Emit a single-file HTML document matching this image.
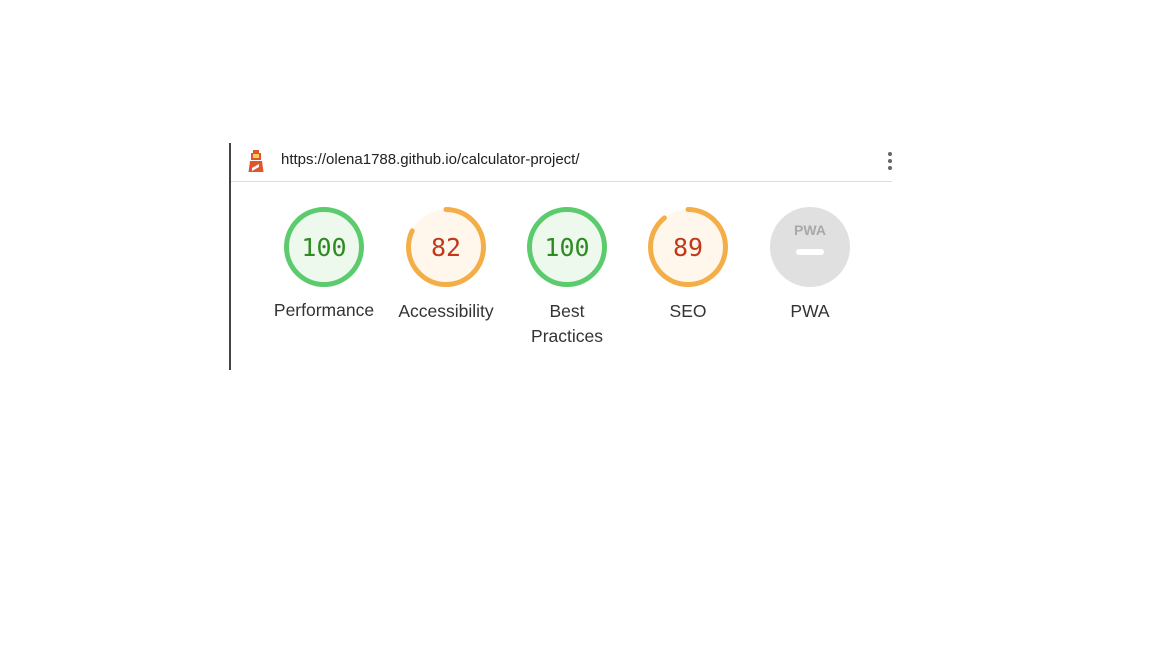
<!DOCTYPE html>
<html><head><meta charset="utf-8"><style>
body{margin:0;width:1152px;height:648px;background:#fff;position:relative;overflow:hidden;font-family:"Liberation Sans",sans-serif}
.vl{position:absolute;left:229px;top:143px;width:2px;height:227px;background:#444}
.hd{position:absolute;left:231px;top:181px;width:661px;height:1px;background:#ddd}
.url{position:absolute;left:281px;top:151px;font-size:15px;color:#212121}
.g{position:absolute;top:207px;width:80px;height:80px}
.lab{position:absolute;width:120px;text-align:center;font-size:17.5px;color:#333;line-height:25px}
.num{font-family:"DejaVu Sans Mono","Liberation Mono",monospace;font-size:25px}
.dot{position:absolute;left:888px;width:4px;height:4px;border-radius:2px;background:#666}
</style></head><body>
<div class="vl"></div><div class="hd"></div>
<svg style="position:absolute;left:247px;top:150px" width="18" height="23" viewBox="0 0 18 23">
<rect x="6" y="0" width="6" height="3" fill="#e2552c"/>
<rect x="4" y="3" width="10" height="7" fill="#e2552c"/>
<rect x="6" y="4" width="6" height="4" fill="#f5d25a"/>
<path d="M3 11h12l1.5 11h-15z" fill="#e2552c"/>
<path d="M5 18l7-4v3l-7 4z" fill="#fff"/>
</svg>
<div class="url">https://olena1788.github.io/calculator-project/</div>
<div class="dot" style="top:152px"></div><div class="dot" style="top:159px"></div><div class="dot" style="top:166px"></div>

<svg class="g" style="left:284px" viewBox="0 0 80 80"><circle cx="40" cy="40" r="37.5" fill="#eef9ee" stroke="#5ccb6e" stroke-width="5"/><text x="40" y="49" text-anchor="middle" class="num" fill="#2f8a23">100</text></svg>
<svg class="g" style="left:406px" viewBox="0 0 80 80"><circle cx="40" cy="40" r="37.5" fill="#fff6ec"/><circle cx="40" cy="40" r="37.5" fill="none" stroke="#f4ae48" stroke-width="5" stroke-dasharray="193.2 300" transform="rotate(-90 40 40)" stroke-linecap="round"/><text x="40" y="49" text-anchor="middle" class="num" fill="#c0391b">82</text></svg>
<svg class="g" style="left:527px" viewBox="0 0 80 80"><circle cx="40" cy="40" r="37.5" fill="#eef9ee" stroke="#5ccb6e" stroke-width="5"/><text x="40" y="49" text-anchor="middle" class="num" fill="#2f8a23">100</text></svg>
<svg class="g" style="left:648px" viewBox="0 0 80 80"><circle cx="40" cy="40" r="37.5" fill="#fff6ec"/><circle cx="40" cy="40" r="37.5" fill="none" stroke="#f4ae48" stroke-width="5" stroke-dasharray="209.7 300" transform="rotate(-90 40 40)" stroke-linecap="round"/><text x="40" y="49" text-anchor="middle" class="num" fill="#c0391b">89</text></svg>
<svg class="g" style="left:770px" viewBox="0 0 80 80"><circle cx="40" cy="40" r="40" fill="#e0e0e0"/><text x="40" y="28" text-anchor="middle" font-family="Liberation Sans,sans-serif" font-weight="bold" font-size="14" fill="#a8a8a8">PWA</text><rect x="26" y="42" width="28" height="6" rx="3" fill="#fff"/></svg>

<div class="lab" style="left:264px;top:298px">Performance</div>
<div class="lab" style="left:386px;top:299px">Accessibility</div>
<div class="lab" style="left:507px;top:299px">Best<br>Practices</div>
<div class="lab" style="left:628px;top:299px">SEO</div>
<div class="lab" style="left:750px;top:299px">PWA</div>
</body></html>
